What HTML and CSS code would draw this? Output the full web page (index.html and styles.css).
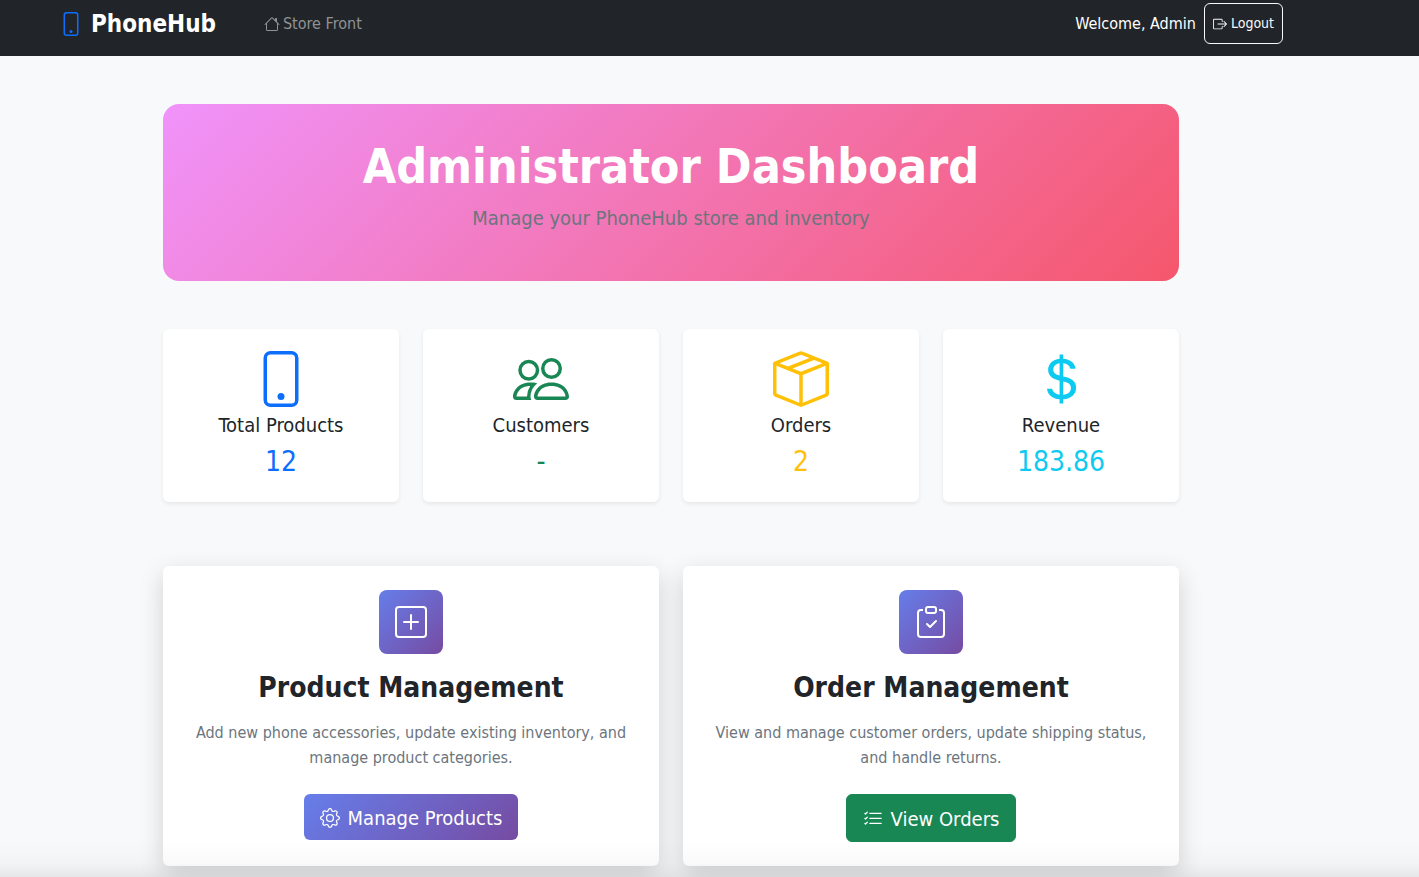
FILE: index.html
```html
<!DOCTYPE html>
<html lang="en">
<head>
<meta charset="utf-8">
<meta name="viewport" content="width=device-width, initial-scale=1">
<title>PhoneHub - Administrator Dashboard</title>
<link rel="stylesheet" href="styles.css">
</head>
<body>
<header class="navbar">
  <a class="brand" href="#">
    <svg class="icon brand-icon" viewBox="0 0 16 16" aria-hidden="true"><path d="M11 1a1 1 0 0 1 1 1v12a1 1 0 0 1-1 1H5a1 1 0 0 1-1-1V2a1 1 0 0 1 1-1zM5 0a2 2 0 0 0-2 2v12a2 2 0 0 0 2 2h6a2 2 0 0 0 2-2V2a2 2 0 0 0-2-2z"/><path d="M8 14a1 1 0 1 0 0-2 1 1 0 0 0 0 2"/></svg>
    <span class="brand-name">PhoneHub</span>
  </a>
  <nav class="nav">
    <a class="nav-link" href="#">
      <svg class="icon" viewBox="0 0 16 16" aria-hidden="true"><path d="M8.707 1.5a1 1 0 0 0-1.414 0L.646 8.146a.5.5 0 0 0 .708.708L2 8.207V13.500A1.500 1.500 0 0 0 3.500 15h9a1.500 1.500 0 0 0 1.500-1.500V8.207l.646.647a.5.5 0 0 0 .708-.708L13 5.793V2.500a.5.5 0 0 0-.5-.5h-1a.5.5 0 0 0-.5.5v1.293zM13 7.207V13.500a.5.5 0 0 1-.5.5h-9a.5.5 0 0 1-.5-.5V7.207l5-5z"/></svg>
      Store Front
    </a>
  </nav>
  <div class="account">
    <span>Welcome, Admin</span>
    <button class="logout" type="button">
      <svg class="icon" viewBox="0 0 16 16" aria-hidden="true"><path fill-rule="evenodd" d="M10 12.500a.5.5 0 0 1-.5.5h-8a.5.5 0 0 1-.5-.5v-9a.5.5 0 0 1 .5-.5h8a.5.5 0 0 1 .5.5v2a.5.5 0 0 0 1 0v-2A1.500 1.500 0 0 0 9.500 2h-8A1.500 1.500 0 0 0 0 3.500v9A1.500 1.500 0 0 0 1.500 14h8a1.500 1.500 0 0 0 1.500-1.500v-2a.5.5 0 0 0-1 0z"/><path fill-rule="evenodd" d="M15.854 8.354a.5.5 0 0 0 0-.708l-3-3a.5.5 0 0 0-.708.708L14.293 7.500H5.500a.5.5 0 0 0 0 1h8.793l-2.147 2.146a.5.5 0 0 0 .708.708z"/></svg>
      Logout
    </button>
  </div>
</header>
<main class="page">
  <div class="content">
    <section class="hero">
      <h1 class="hero-title">Administrator Dashboard</h1>
      <p class="hero-text">Manage your PhoneHub store and inventory</p>
    </section>
    <section class="stats">
      <article class="stat">
        <svg class="icon stat-icon blue" viewBox="0 0 16 16" aria-hidden="true"><path d="M11 1a1 1 0 0 1 1 1v12a1 1 0 0 1-1 1H5a1 1 0 0 1-1-1V2a1 1 0 0 1 1-1zM5 0a2 2 0 0 0-2 2v12a2 2 0 0 0 2 2h6a2 2 0 0 0 2-2V2a2 2 0 0 0-2-2z"/><path d="M8 14a1 1 0 1 0 0-2 1 1 0 0 0 0 2"/></svg>
        <h2 class="stat-label">Total Products</h2>
        <p class="stat-value blue">12</p>
      </article>
      <article class="stat">
        <svg class="icon stat-icon green" viewBox="0 0 16 16" aria-hidden="true"><path d="M15 14s1 0 1-1-1-4-5-4-5 3-5 4 1 1 1 1zm-7.978-1L7 12.996c.001-.264.167-1.030.760-1.720C8.312 10.629 9.282 10 11 10c1.717 0 2.687.630 3.240 1.276.593.690.758 1.457.760 1.720l-.008.002-.014.002zM11 7a2 2 0 1 0 0-4 2 2 0 0 0 0 4m3-2a3 3 0 1 1-6 0 3 3 0 0 1 6 0M6.936 9.280a6 6 0 0 0-1.230-.247A7 7 0 0 0 5 9c-4 0-5 3-5 4q0 1 1 1h4.216A2.240 2.240 0 0 1 5 13c0-1.010.377-2.042 1.090-2.904.243-.294.526-.569.846-.816M4.920 10A5.500 5.500 0 0 0 4 13H1c0-.260.164-1.030.760-1.724.545-.636 1.492-1.256 3.160-1.275ZM1.500 5.500a3 3 0 1 1 6 0 3 3 0 0 1-6 0m3-2a2 2 0 1 0 0 4 2 2 0 0 0 0-4"/></svg>
        <h2 class="stat-label">Customers</h2>
        <p class="stat-value green">-</p>
      </article>
      <article class="stat">
        <svg class="icon stat-icon yellow" viewBox="0 0 16 16" aria-hidden="true"><path d="M8.186 1.113a.5.5 0 0 0-.372 0L1.846 3.500l2.404.961L10.404 2zm3.564 1.426L5.596 5 8 5.961 14.154 3.500zm3.250 1.700-6.500 2.600v7.922l6.500-2.600V4.240zM7.500 14.762V6.838L1 4.239v7.923zM7.443.184a1.500 1.500 0 0 1 1.114 0l7.129 2.852A.5.5 0 0 1 16 3.500v8.662a1 1 0 0 1-.629.928l-7.185 2.874a.5.5 0 0 1-.372 0L.630 13.090a1 1 0 0 1-.630-.928V3.500a.5.5 0 0 1 .314-.464z"/></svg>
        <h2 class="stat-label">Orders</h2>
        <p class="stat-value yellow">2</p>
      </article>
      <article class="stat">
        <svg class="icon stat-icon cyan" viewBox="0 0 16 16" aria-hidden="true"><path d="M4 10.781c.148 1.667 1.513 2.850 3.591 3.003V15h1.043v-1.216c2.270-.179 3.678-1.438 3.678-3.300 0-1.590-.947-2.510-2.956-3.028l-.722-.187V3.467c1.122.110 1.879.714 2.070 1.616h1.470c-.166-1.600-1.540-2.748-3.540-2.875V1H7.591v1.233c-1.939.230-3.270 1.472-3.270 3.156 0 1.454.966 2.483 2.661 2.917l.610.162v4.031c-1.149-.170-1.940-.800-2.131-1.718zm3.391-3.836c-1.043-.263-1.600-.825-1.600-1.616 0-.944.704-1.641 1.800-1.828v3.495l-.200-.050zm1.591 1.872c1.287.323 1.852.859 1.852 1.769 0 1.097-.826 1.828-2.200 1.939V8.730z"/></svg>
        <h2 class="stat-label">Revenue</h2>
        <p class="stat-value cyan">183.86</p>
      </article>
    </section>
    <section class="panels">
      <article class="panel">
        <div class="panel-badge">
          <svg class="icon" viewBox="0 0 16 16" aria-hidden="true"><path d="M14 1a1 1 0 0 1 1 1v12a1 1 0 0 1-1 1H2a1 1 0 0 1-1-1V2a1 1 0 0 1 1-1zM2 0a2 2 0 0 0-2 2v12a2 2 0 0 0 2 2h12a2 2 0 0 0 2-2V2a2 2 0 0 0-2-2z"/><path d="M8 4a.5.5 0 0 1 .5.5v3h3a.5.5 0 0 1 0 1h-3v3a.5.5 0 0 1-1 0v-3h-3a.5.5 0 0 1 0-1h3v-3A.5.5 0 0 1 8 4"/></svg>
        </div>
        <h2 class="panel-title">Product Management</h2>
        <p class="panel-text">Add new phone accessories, update existing inventory, and manage product categories.</p>
        <a class="button button-gradient" href="#">
          <svg class="icon" viewBox="0 0 16 16" aria-hidden="true"><path d="M8 4.754a3.246 3.246 0 1 0 0 6.492 3.246 3.246 0 0 0 0-6.492M5.754 8a2.246 2.246 0 1 1 4.492 0 2.246 2.246 0 0 1-4.492 0"/><path d="M9.796 1.343c-.527-1.790-3.065-1.790-3.592 0l-.094.319a.873.873 0 0 1-1.255.520l-.292-.160c-1.640-.892-3.433.902-2.540 2.541l.159.292a.873.873 0 0 1-.520 1.255l-.319.094c-1.790.527-1.790 3.065 0 3.592l.319.094a.873.873 0 0 1 .520 1.255l-.160.292c-.892 1.640.901 3.434 2.541 2.540l.292-.159a.873.873 0 0 1 1.255.520l.094.319c.527 1.790 3.065 1.790 3.592 0l.094-.319a.873.873 0 0 1 1.255-.520l.292.160c1.640.893 3.434-.902 2.540-2.541l-.159-.292a.873.873 0 0 1 .520-1.255l.319-.094c1.790-.527 1.790-3.065 0-3.592l-.319-.094a.873.873 0 0 1-.520-1.255l.160-.292c.893-1.640-.902-3.433-2.541-2.540l-.292.159a.873.873 0 0 1-1.255-.520zm-2.633.283c.246-.835 1.428-.835 1.674 0l.094.319a1.873 1.873 0 0 0 2.693 1.115l.291-.160c.764-.415 1.600.420 1.184 1.185l-.159.292a1.873 1.873 0 0 0 1.116 2.692l.318.094c.835.246.835 1.428 0 1.674l-.319.094a1.873 1.873 0 0 0-1.115 2.693l.160.291c.415.764-.420 1.600-1.185 1.184l-.291-.159a1.873 1.873 0 0 0-2.693 1.116l-.094.318c-.246.835-1.428.835-1.674 0l-.094-.319a1.873 1.873 0 0 0-2.692-1.115l-.292.160c-.764.415-1.600-.420-1.184-1.185l.159-.291A1.873 1.873 0 0 0 1.945 8.930l-.319-.094c-.835-.246-.835-1.428 0-1.674l.319-.094A1.873 1.873 0 0 0 3.060 4.377l-.160-.292c-.415-.764.420-1.600 1.185-1.184l.292.159a1.873 1.873 0 0 0 2.692-1.115z"/></svg>
          Manage Products
        </a>
      </article>
      <article class="panel">
        <div class="panel-badge">
          <svg class="icon" viewBox="0 0 16 16" aria-hidden="true"><path fill-rule="evenodd" d="M10.854 7.146a.5.5 0 0 1 0 .708l-3 3a.5.5 0 0 1-.708 0l-1.500-1.500a.5.5 0 1 1 .708-.708L7.500 9.793l2.646-2.647a.5.5 0 0 1 .708 0"/><path d="M4 1.500H3a2 2 0 0 0-2 2V14a2 2 0 0 0 2 2h10a2 2 0 0 0 2-2V3.500a2 2 0 0 0-2-2h-1v1h1a1 1 0 0 1 1 1V14a1 1 0 0 1-1 1H3a1 1 0 0 1-1-1V3.500a1 1 0 0 1 1-1h1z"/><path d="M9.500 1a.5.5 0 0 1 .5.5v1a.5.5 0 0 1-.5.5h-3a.5.5 0 0 1-.5-.5v-1a.5.5 0 0 1 .5-.5zm-3-1A1.500 1.500 0 0 0 5 1.500v1A1.500 1.500 0 0 0 6.500 4h3A1.500 1.500 0 0 0 11 2.500v-1A1.500 1.500 0 0 0 9.500 0z"/></svg>
        </div>
        <h2 class="panel-title">Order Management</h2>
        <p class="panel-text">View and manage customer orders, update shipping status, and handle returns.</p>
        <a class="button button-green" href="#">
          <svg class="icon" viewBox="0 0 16 16" aria-hidden="true"><path fill-rule="evenodd" d="M5 11.500a.5.5 0 0 1 .5-.5h9a.5.5 0 0 1 0 1h-9a.5.5 0 0 1-.5-.5m0-4a.5.5 0 0 1 .5-.5h9a.5.5 0 0 1 0 1h-9a.5.5 0 0 1-.5-.5m0-4a.5.5 0 0 1 .5-.5h9a.5.5 0 0 1 0 1h-9a.5.5 0 0 1-.5-.5M3.854 2.146a.5.5 0 0 1 0 .708l-1.500 1.500a.5.5 0 0 1-.708 0l-.5-.5a.5.5 0 1 1 .708-.708L2 3.293l1.146-1.147a.5.5 0 0 1 .708 0m0 4a.5.5 0 0 1 0 .708l-1.500 1.500a.5.5 0 0 1-.708 0l-.5-.5a.5.5 0 1 1 .708-.708L2 7.293l1.146-1.147a.5.5 0 0 1 .708 0m0 4a.5.5 0 0 1 0 .708l-1.500 1.500a.5.5 0 0 1-.708 0l-.5-.5a.5.5 0 0 1 .708-.708l.146.147 1.146-1.147a.5.5 0 0 1 .708 0"/></svg>
          View Orders
        </a>
      </article>
    </section>
  </div>
</main>
<div class="bottom-fade"></div>
</body>
</html>
```

FILE: styles.css
```css
* {
  box-sizing: border-box;
}

body {
  margin: 0;
  background: #f8f9fa;
  color: #212529;
  font-family: Tahoma, "DejaVu Sans Condensed", "Noto Sans", sans-serif;
  font-size: 16px;
  line-height: 25px;
}

h1, h2, p {
  margin: 0;
}

a {
  color: inherit;
  text-decoration: none;
}

.icon {
  width: 16px;
  height: 16px;
  flex: none;
  fill: currentColor;
}

.navbar {
  display: flex;
  align-items: center;
  padding: 3px 136px 12px 59px;
  background: #212529;
  color: #fff;
}

.brand {
  display: flex;
  align-items: center;
  gap: 8px;
  font-size: 24px;
  font-weight: 700;
}

.brand-name {
  padding-top: 2px;
}

.brand-icon {
  width: 24px;
  height: 24px;
  color: #0d6efd;
}

.nav {
  margin-left: 48px;
}

.nav-link {
  display: flex;
  align-items: center;
  gap: 3px;
  color: #909294;
}

.account {
  display: flex;
  align-items: center;
  gap: 8px;
  margin-left: auto;
}

.logout {
  display: flex;
  align-items: center;
  gap: 4px;
  padding: 8px;
  border: 1px solid #f8f9fa;
  border-radius: 6px;
  background: transparent;
  color: #f8f9fa;
  font-family: inherit;
  font-size: 14px;
  line-height: 23px;
}

.logout .icon {
  width: 14px;
  height: 14px;
}

.page {
  padding: 48px 77px 11px 0;
}

.content {
  display: grid;
  max-width: 1016px;
  margin: 0 auto;
}

.hero {
  padding: 33px 32px 47px;
  border-radius: 16px;
  background: linear-gradient(135deg, #f093fb 0%, #f5576c 100%);
  text-align: center;
}

.hero-title {
  margin-bottom: 8px;
  color: #fff;
  font-size: 48px;
  line-height: 58px;
}

.hero-text {
  color: #6c757d;
  font-size: 20px;
  line-height: 31px;
}

.stats {
  display: grid;
  grid-template-columns: repeat(4, 1fr);
  gap: 24px;
  margin-top: 48px;
}

.stat {
  display: flex;
  flex-direction: column;
  align-items: center;
  padding: 22px 16px 23px;
  border-radius: 6px;
  background: #fff;
  box-shadow: 0 2px 4px rgba(0, 0, 0, 0.075);
}

.stat-icon {
  width: 56px;
  height: 56px;
}

.stat-label {
  margin: 6px 0 8px;
  font-size: 20px;
  font-weight: 400;
  line-height: 24px;
}

.stat-value {
  font-size: 28px;
  line-height: 34px;
}

.blue { color: #0d6efd; }
.green { color: #198754; }
.yellow { color: #ffc107; }
.cyan { color: #0dcaf0; }

.panels {
  display: grid;
  grid-template-columns: repeat(2, 1fr);
  gap: 24px;
  margin-top: 64px;
}

.panel {
  display: flex;
  flex-direction: column;
  align-items: center;
  padding: 24px;
  border-radius: 6px;
  background: #fff;
  box-shadow: 0 8px 24px rgba(0, 0, 0, 0.16);
  text-align: center;
}

.panel-badge {
  display: grid;
  place-items: center;
  width: 64px;
  height: 64px;
  border-radius: 8px;
  background: linear-gradient(135deg, #667eea 0%, #764ba2 100%);
  color: #fff;
}

.panel-badge .icon {
  width: 32px;
  height: 32px;
}

.panel-title {
  margin: 17px 0 15px;
  font-size: 28px;
  line-height: 34px;
}

.panel-text {
  margin-bottom: 24px;
  color: #6c757d;
}

.button {
  display: flex;
  align-items: center;
  gap: 8px;
  padding: 9px 16px 7px;
  border-radius: 6px;
  color: #fff;
  font-size: 20px;
  line-height: 30px;
}

.button .icon {
  width: 20px;
  height: 20px;
}

.button-gradient {
  background: linear-gradient(135deg, #667eea 0%, #764ba2 100%);
}

.button-green {
  border: 1px solid #198754;
  background: #198754;
}

.bottom-fade {
  position: fixed;
  right: 0;
  bottom: 0;
  left: 0;
  height: 36px;
  background: linear-gradient(rgba(0, 0, 0, 0), rgba(0, 0, 0, 0.02) 60%, rgba(0, 0, 0, 0.07));
  pointer-events: none;
}
```
